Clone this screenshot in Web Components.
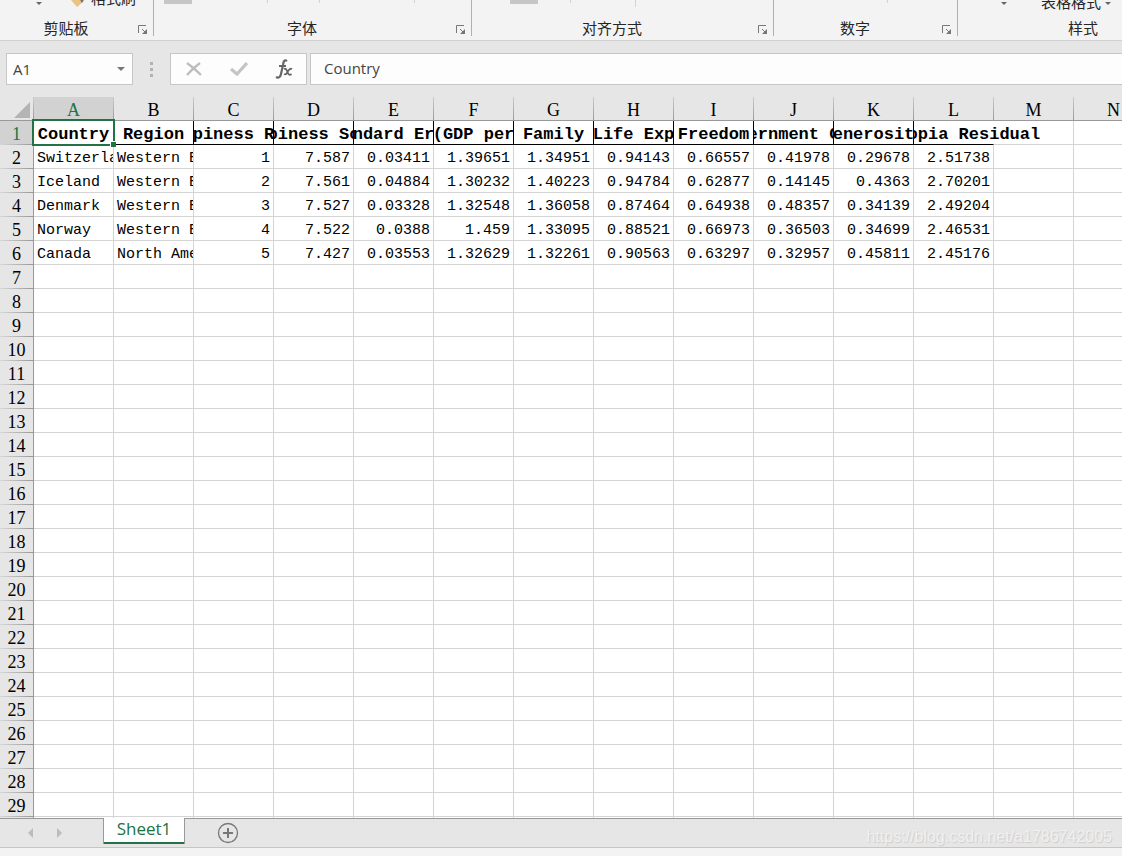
<!DOCTYPE html>
<html lang="zh-CN">
<head>
<meta charset="utf-8">
<title>Sheet1</title>
<style>
  html, body { margin: 0; height: 100%; }
  body { font-family: "Open Sans", "Noto Sans CJK SC", sans-serif; font-size: 15px; color: #262626; overflow: hidden; }
</style>
</head>
<body>
<sheet-app></sheet-app>

<template id="t-app">
  <style>
    :host { display: flex; flex-direction: column; height: 100vh; background: #e6e6e6; position: relative; overflow: hidden; }
    sheet-grid { flex: 1 1 0; min-height: 0; }
    footer { height: 8px; background: #f3f3f3; }
    .mark { position: absolute; right: 10px; bottom: 9px; font: 16px/20px "Liberation Sans", sans-serif; color: #f0f0f0; text-shadow: 1px 1px 1px #ccc; }
    .row { display: flex; height: 40px; overflow: hidden; background: #f3f3f3; border-bottom: 1px solid #d0d0d0; }
    ribbon-group { flex: none; }
    .clip { width: 154px; } .font { width: 318px; } .align { width: 302px; } .num { width: 184px; } .style { width: 250px; }
    svg { display: block; flex: none; }
    button { all: unset; font: 15px/20px "Noto Sans CJK SC", sans-serif; color: #262626; white-space: nowrap; }
    .brush { padding-bottom: 4px; }
  </style>
  <div class="row">
    <ribbon-group class="clip" label="剪贴板">
      <svg width="91" height="12" viewBox="0 0 91 12"><path d="M36 2h6l-3 3z" fill="#666"/><path d="M71 0h9l3 2-6 5z" fill="#eac282"/><path d="M80 0h4l-2 3z" fill="#777"/></svg>
      <button class="brush">格式刷</button>
    </ribbon-group>
    <ribbon-group class="font" label="字体">
      <svg width="300" height="12" viewBox="0 0 300 12"><path d="M10 0h28v4h-28z" fill="#c6c6c6"/><path d="M113 0h1v3h-1zM165 0h1v3h-1zM260 0h1v3h-1z" fill="#d2d2d2"/></svg>
    </ribbon-group>
    <ribbon-group class="align" label="对齐方式">
      <svg width="300" height="12" viewBox="0 0 300 12"><path d="M38 0h28v4h-28z" fill="#c6c6c6"/><path d="M98 0h1v3h-1zM163 0h1v7h-1z" fill="#d2d2d2"/></svg>
    </ribbon-group>
    <ribbon-group class="num" label="数字">
      <svg width="180" height="12" viewBox="0 0 180 12"><path d="M113 0h1v3h-1z" fill="#d2d2d2"/></svg>
    </ribbon-group>
    <ribbon-group class="style" label="样式" plain>
      <svg width="83" height="12" viewBox="0 0 83 12"><path d="M43 2h6l-3 3z" fill="#666"/></svg>
      <button>表格格式</button>
      <svg width="12" height="12" viewBox="0 0 12 12"><path d="M4 2h6l-3 3z" fill="#666"/></svg>
    </ribbon-group>
  </div>
  <formula-bar cell="A1" value="Country"></formula-bar>
  <sheet-grid></sheet-grid>
  <sheet-tabs><span>Sheet1</span></sheet-tabs>
  <footer></footer>
  <div class="mark">https://blog.csdn.net/a1786742005</div>
</template>

<template id="t-group">
  <style>
    :host { display: grid; grid-template-rows: 12px 24px; box-sizing: border-box; }
    .cmds { display: flex; align-items: flex-end; overflow: hidden; border-right: 1px solid #b0b0b0; }
    .foot { display: flex; align-items: center; border-right: 1px solid #b0b0b0; padding-top: 8px; box-sizing: border-box; }
    :host([plain]) .cmds, :host([plain]) .foot { border: 0; }
    .name { flex: 1; text-align: center; font: 15px/16px "Noto Sans CJK SC", sans-serif; }
    button { all: unset; width: 21px; display: flex; }
    button svg { margin-left: 6px; margin-top: 4px; }
    :host([plain]) button { display: none; }
  </style>
  <div class="cmds"><slot></slot></div>
  <div class="foot"><span class="name"></span>
    <button aria-label="more"><svg width="10" height="10" viewBox="0 0 10 10"><path d="M.5 8V.5H8M4 4l3 3" fill="none" stroke="#777"/><path d="M9 4v5H4z" fill="#777"/></svg></button></div>
</template>

<template id="t-formula">
  <style>
    :host { display: flex; align-items: stretch; height: 32px; padding: 12px 0 12px 6px; }
    .box { display: flex; align-items: center; background: #fdfdfd; border: 1px solid #c6c6c6; box-sizing: border-box; }
    .ref { width: 127px; }
    input { all: unset; box-sizing: border-box; min-width: 0; flex: 1; padding: 0 6px; font: 15px/20px "Open Sans", sans-serif; color: #444; }
    button { all: unset; display: flex; justify-content: center; flex: none; }
    .drop { width: 22px; }
    .grip { width: 37px; display: flex; align-items: center; justify-content: center; }
    .tools { width: 137px; margin-right: 3px; }
    .tools button { width: 45px; }
    .text { flex: 1; border-right: 0; }
    .text input { padding: 0 13px 2px; }
  </style>
  <div class="box ref"><input class="cell" aria-label="Name box"><button class="drop" aria-label="Cells"><svg width="8" height="4"><path d="M0 0h8l-4 4z" fill="#777"/></svg></button></div>
  <div class="grip"><svg width="3" height="15"><path d="M0 0h3v3H0zM0 6h3v3H0zM0 12h3v3H0z" fill="#b2b2b2"/></svg></div>
  <div class="box tools">
    <button aria-label="Cancel"><svg width="16" height="14" viewBox="0 0 16 14"><path d="M1 1q7 5 14 12M14 1Q7 6 1 13" fill="none" stroke="#bdbdbd" stroke-width="2.300"/></svg></button>
    <button aria-label="Enter"><svg width="18" height="14" viewBox="0 0 18 14"><path d="M1 7l6 5L17 1" fill="none" stroke="#c4c4c4" stroke-width="3.200"/></svg></button>
    <button aria-label="Function"><svg width="18" height="20" viewBox="0 0 18 20"><path d="M12 2C9 0 8.500 3 8 6L6 15C5.500 18 3.500 19.500 1 18M4 7h7" fill="none" stroke="#666" stroke-width="2.200"/><path d="M9 10q2-1 3 2l1 2q1 3 3.500 1M17 10q-2-1-4 2l-1 2q-1 2-3 1" fill="none" stroke="#666" stroke-width="1.800"/></svg></button>
  </div>
  <div class="box text"><input class="value" aria-label="Formula"></div>
</template>

<template id="t-grid">
  <style>
    :host { display: block; overflow: hidden;
      background: repeating-linear-gradient(to right, transparent 0 79px, #d4d4d4 79px 80px) 34px 0 no-repeat,
        linear-gradient(to right, #e6e6e6 0 33px, #999 33px 34px, #fff 34px); }
    table { table-layout: fixed; width: 1154px; border-collapse: separate; border-spacing: 0; font: 15px/20px "Liberation Mono", monospace; color: #000; }
    col { width: 80px; } col:first-child { width: 34px; }
    th, td { box-sizing: border-box; height: 24px; padding: 4px 3px 0; line-height: 19px; overflow: hidden; white-space: nowrap; vertical-align: top; border: 0 solid #d4d4d4; border-width: 0 1px 1px 0; }
    td { background: #fff; } td.n { text-align: right; }
    tr:first-child td { background: none; }
    thead th { border-color: #999; border-right: 0; }
    th { font: 18px/20px "Liberation Serif", serif; text-align: center; padding: 3px 0 0; }
    thead th { background: linear-gradient(#ccc, #999) right / 1px 100% no-repeat #e6e6e6; padding-right: 1px; }
    tbody th { background: linear-gradient(to right, #d6d6d6, #999) bottom / 100% 1px no-repeat #e6e6e6; border-bottom: 0; border-right-color: #999; }
    .on.on { background-color: #d2d2d2; color: #217346; }
    thead th:first-child { padding: 5px 4px 0 0; }
    thead svg { display: block; margin-left: auto; }
    tr .b { font: bold 17px/20px "Liberation Mono", monospace; padding: 4px 0 0; line-height: 19px; border-color: #000; }
    .b span { display: flex; justify-content: center; }
    tr td.spill { overflow: visible; border-right-color: #fff; }
    .spill span { clip-path: inset(0 -80px 0 0); }
    td.sel { position: relative; overflow: visible; }
    .sel::before { content: ""; position: absolute; inset: -2px; border: 2px solid #217346; z-index: 1; }
    .sel::after { content: ""; position: absolute; right: -3px; bottom: -3px; width: 5px; height: 5px; background: #217346; border: 1px solid #fff; border-width: 1px 0 0 1px; z-index: 2; }
  </style>
  <table><colgroup></colgroup><thead><tr></tr></thead><tbody></tbody></table>
</template>

<template id="t-tabs">
  <style>
    :host { display: flex; height: 28px; border-top: 1px solid #999; border-bottom: 1px solid #c6c6c6; background: #e6e6e6; }
    button { all: unset; display: flex; align-items: center; justify-content: center; }
    .nav { display: flex; width: 89px; padding-left: 14px; }
    .nav button { width: 32px; } .nav button + button { width: 26px; }
    .tab { box-sizing: border-box; width: 82px; height: 26px; margin-top: -1px; background: #fff; border: 1px solid #999; border-width: 0 1px; box-shadow: inset 0 -2px #217346; color: #217346; font: 17px/20px "Open Sans", sans-serif; padding-bottom: 4px; }
    .add { margin-left: 32px; }
  </style>
  <div class="nav">
    <button aria-label="Previous"><svg width="5" height="10"><path d="M5 0v10L0 5z" fill="#bcbcbc"/></svg></button>
    <button aria-label="Next"><svg width="5" height="10"><path d="M0 0v10l5-5z" fill="#bcbcbc"/></svg></button>
  </div>
  <button class="tab"><slot></slot></button>
  <button class="add" aria-label="New sheet"><svg width="22" height="22" viewBox="0 0 22 22"><circle cx="11" cy="11" r="9.500" fill="none" stroke="#777" stroke-width="1.300"/><path d="M11 6v10M6 11h10" stroke="#777" stroke-width="2"/></svg></button>
</template>

<script>
  class Base extends HTMLElement {
    constructor(id) {
      super();
      this.attachShadow({ mode: "open" }).append(document.getElementById(id).content.cloneNode(true));
    }
    $(s) { return this.shadowRoot.querySelector(s); }
  }
  customElements.define("ribbon-group", class extends Base {
    constructor() { super("t-group"); }
    connectedCallback() { this.$(".name").textContent = this.getAttribute("label"); }
  });
  customElements.define("formula-bar", class extends Base {
    constructor() { super("t-formula"); }
    connectedCallback() {
      this.$(".cell").value = this.getAttribute("cell");
      this.$(".value").value = this.getAttribute("value");
    }
  });
  customElements.define("sheet-tabs", class extends Base { constructor() { super("t-tabs"); } });

  const HEAD = ["Country", "Region", "Happiness Rank", "Happiness Score", "Standard Error", "Economy (GDP per Capita)", "Family",
    "Health (Life Expectancy)", "Freedom", "Trust (Government Corruption)", "Generosity", "Dystopia Residual"];
  const DATA = [
    ["Switzerland", "Western Europe", "1", "7.587", "0.03411", "1.39651", "1.34951", "0.94143", "0.66557", "0.41978", "0.29678", "2.51738"],
    ["Iceland", "Western Europe", "2", "7.561", "0.04884", "1.30232", "1.40223", "0.94784", "0.62877", "0.14145", "0.4363", "2.70201"],
    ["Denmark", "Western Europe", "3", "7.527", "0.03328", "1.32548", "1.36058", "0.87464", "0.64938", "0.48357", "0.34139", "2.49204"],
    ["Norway", "Western Europe", "4", "7.522", "0.0388", "1.459", "1.33095", "0.88521", "0.66973", "0.36503", "0.34699", "2.46531"],
    ["Canada", "North America", "5", "7.427", "0.03553", "1.32629", "1.32261", "0.90563", "0.63297", "0.32957", "0.45811", "2.45176"]
  ];
  const COLS = "ABCDEFGHIJKLMN".split(""), ROWS = 29;
  customElements.define("sheet-grid", class extends Base {
    constructor() { super("t-grid"); }
    connectedCallback() {
      this.$("colgroup").innerHTML = "<col>".repeat(COLS.length + 1);
      this.$("thead tr").innerHTML = '<th><svg width="16" height="16"><path d="M16 0v16H0z" fill="#b4b4b4"/></svg></th>' +
        COLS.map((c, i) => `<th scope="col"${i ? "" : ' class="on"'}>${c}</th>`).join("");
      let html = "";
      for (let r = 0; r < ROWS; r++) {
        html += `<tr><th scope="row"${r ? "" : ' class="on"'}>${r + 1}</th>`;
        COLS.forEach((_, c) => {
          if (r === 0 && HEAD[c]) {
            const cls = c === 0 ? "b sel" : c === 11 ? "b spill" : "b";
            html += `<td class="${cls}"><span>${HEAD[c]}</span></td>`;
          } else {
            html += `<td${c > 1 ? ' class="n"' : ""}>${(DATA[r - 1] || [])[c] || ""}</td>`;
          }
        });
        html += "</tr>";
      }
      this.$("tbody").innerHTML = html;
    }
  });
  customElements.define("sheet-app", class extends Base { constructor() { super("t-app"); } });
</script>
</body>
</html>
